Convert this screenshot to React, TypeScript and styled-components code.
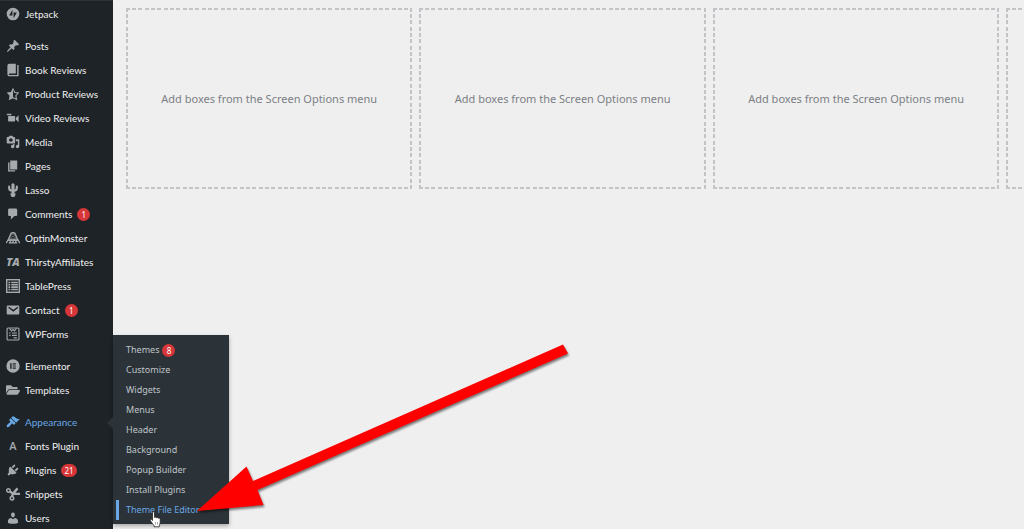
import React from "react";
import styled, { createGlobalStyle, css } from "styled-components";
import { FaFolderOpen } from "react-icons/fa";

const GlobalStyle = createGlobalStyle`
  *, *::before, *::after { box-sizing: border-box; }
  body {
    margin: 0;
    background: #efefef;
    font-family: "Segoe UI", "Noto Sans", sans-serif;
    overflow: hidden;
  }
`;

const Page = styled.div`
  position: relative;
  display: flex;
  height: 100vh;
  overflow: hidden;
`;

const Sidebar = styled.nav`
  position: relative;
  z-index: 1;
  flex: none;
  width: 113px;
  background: #1d2327;
  border-top: 1px solid #2c3338;
  padding-top: 1px;
`;

const MenuGroup = styled.ul`
  list-style: none;
  margin: 0 0 8px;
  padding: 0;
`;

const MenuRow = styled.li<{ $active?: boolean }>`
  position: relative;
  ${(p) =>
    p.$active &&
    css`
      &::after {
        content: "";
        position: absolute;
        right: 0;
        top: 7px;
        border: 6px solid transparent;
        border-left-width: 0;
        border-right-color: #2c3338;
      }
    `}
`;

const MenuLink = styled.a<{ $active?: boolean }>`
  display: flex;
  align-items: center;
  gap: 5px;
  height: 24px;
  padding-left: 6px;
  font-family: "Segoe UI", Lato, sans-serif;
  font-size: 10px;
  line-height: 14px;
  white-space: nowrap;
  text-decoration: none;
  color: ${(p) => (p.$active ? "#68a8e6" : "#f0f0f1")};

  svg {
    flex: none;
    width: 14px;
    height: 14px;
    color: ${(p) => (p.$active ? "#68a8e6" : "#a7aaad")};
  }
`;

const LetterMark = styled.span<{ $brand?: boolean }>`
  flex: none;
  width: 14px;
  display: flex;
  justify-content: center;
  color: #a7aaad;
  font: ${(p) => (p.$brand ? "italic 800 11px/14px" : "600 11px/14px")} "Open Sans", sans-serif;
`;

const Badge = styled.span`
  display: inline-flex;
  align-items: center;
  justify-content: center;
  min-width: 13px;
  height: 13px;
  padding: 0 3px;
  border-radius: 7px;
  background: #d63638;
  color: #fff;
  font-family: "Segoe UI", "Noto Sans", sans-serif;
  font-size: 8px;
  line-height: 13px;
`;

const Submenu = styled.ul`
  position: absolute;
  left: 100%;
  bottom: -90px;
  width: 116px;
  margin: 0;
  padding: 5px 0 4px;
  list-style: none;
  background: #2c3338;
  box-shadow: 0 2px 4px rgba(0, 0, 0, 0.3);
`;

const SubmenuLink = styled.a<{ $current?: boolean }>`
  display: flex;
  align-items: center;
  gap: 3px;
  height: 20px;
  margin-left: 3px;
  padding-left: 10px;
  font-size: 9px;
  line-height: 12px;
  white-space: nowrap;
  text-decoration: none;
  color: ${(p) => (p.$current ? "#68a8e6" : "#bfc4c9")};
  box-shadow: ${(p) => (p.$current ? "inset 3px 0 0 #68a8e6" : "none")};
`;

const Content = styled.main`
  flex: 1;
  min-width: 0;
  padding: 8px 0 0 13px;
`;

const Boxes = styled.div`
  display: grid;
  grid-template-columns: repeat(4, 31.9%);
  gap: 7px;
`;

const dash = (dir: string) =>
  `linear-gradient(to ${dir}, #c3c4c7 4px, transparent 4px 6px, #c3c4c7 6px 10px, transparent 10px 12px, #c3c4c7 12px 16px, transparent 16px)`;

const EmptyBox = styled.section`
  display: flex;
  align-items: center;
  justify-content: center;
  height: 181px;
  color: #7c8085;
  font-size: 11px;
  line-height: 16px;
  background:
    ${dash("right")} left top / 19px 2px repeat-x,
    ${dash("right")} left bottom / 19px 2px repeat-x,
    ${dash("bottom")} left top / 2px 19px repeat-y,
    ${dash("bottom")} right top / 2px 19px repeat-y;
`;

const Arrow = styled.svg`
  position: absolute;
  z-index: 2;
  left: 190px;
  top: 335px;
  pointer-events: none;
  filter: drop-shadow(1px 2px 1px rgba(0, 0, 0, 0.5));
`;

const Pointer = styled.svg`
  position: absolute;
  z-index: 3;
  left: 149px;
  top: 511px;
  pointer-events: none;
`;

const Glyph = ({ d }: { d: string }) => (
  <svg viewBox="0 0 20 20" fill="currentColor" fillRule="evenodd" aria-hidden="true">
    <path d={d} />
  </svg>
);

const icons: Record<string, React.ReactNode> = {
  jetpack: (
    <Glyph d="M10 1a9 9 0 1 0 0 18 9 9 0 0 0 0-18zM9.200 4v8H4.500zM10.800 8h4.700l-4.700 8z" />
  ),
  pin: (
    <Glyph d="M10.44 3.02l1.82-1.82 6.36 6.35-1.83 1.82c-1.05-.68-2.48-.57-3.41.36l-.75.75c-.92.93-1.04 2.35-.35 3.41l-1.83 1.82-2.41-2.41-2.8 2.79c-.42.42-3.38 2.71-3.8 2.29s1.86-3.39 2.28-3.81l2.79-2.79L4.1 9.36l1.83-1.82c1.05.69 2.48.57 3.4-.36l.75-.75c.93-.92 1.05-2.35.36-3.41z" />
  ),
  book: (
    <Glyph d="M16 3h2v16H5c-1.66 0-3-1.34-3-3V4c0-1.66 1.34-3 3-3h9v14H5c-.55 0-1 .45-1 1s.45 1 1 1h11V3z" />
  ),
  star: (
    <Glyph d="M10 1L7 7l-6 .75 4.130 4.620L4 19l6-3 6 3-1.120-6.630L19 7.750 13 7zM10 4l2 4.400 4 .5-2.700 3.200.7 4.400-4-2.200z" />
  ),
  video: (
    <Glyph d="M8 5c0-.55-.45-1-1-1H2c-.55 0-1 .45-1 1 0 .57.49 1 1 1h5c.55 0 1-.45 1-1zm6 5l4-4v10l-4-4v-2zm-1 4V8c0-.55-.45-1-1-1H4c-.55 0-1 .45-1 1v6c0 .55.45 1 1 1h8c.55 0 1-.45 1-1z" />
  ),
  media: (
    <Glyph d="M13 11V4c0-.55-.45-1-1-1h-1.67L9 1H5L3.67 3H2c-.55 0-1 .45-1 1v7c0 .55.45 1 1 1h10c.55 0 1-.45 1-1zM7 4.5c1.38 0 2.5 1.12 2.5 2.5S8.38 9.5 7 9.5 4.5 8.38 4.5 7 5.62 4.5 7 4.5zM14 6h5v10.5c0 1.38-1.12 2.5-2.5 2.5S14 17.88 14 16.5s1.12-2.5 2.5-2.5c.17 0 .34.02.5.05V9h-3V6zm-4 8.05V13h2v3.5c0 1.38-1.12 2.5-2.5 2.5S7 17.88 7 16.5 8.12 14 9.5 14c.17 0 .34.02.5.05z" />
  ),
  pages: <Glyph d="M6 15V2h10v13H6zm-1 1h8v2H3V5h2v11z" />,
  cactus: (
    <svg viewBox="0 0 20 20" fill="none" stroke="currentColor" strokeLinecap="round" aria-hidden="true">
      <path d="M10 2.500v11" strokeWidth="4.500" />
      <path d="M4.500 5v2.500c0 2.500 2 3.500 5 3.500M15.500 5v2.500c0 2.500-2 3.500-5 3.500" strokeWidth="3" />
      <path d="M6.500 14.500h7V17l-1.500 3H8l-1.500-3z" fill="currentColor" stroke="none" />
    </svg>
  ),
  comments: (
    <Glyph d="M5 2h9c1.1 0 2 .9 2 2v7c0 1.1-.9 2-2 2h-2l-5 5v-5H5c-1.1 0-2-.9-2-2V4c0-1.1.9-2 2-2z" />
  ),
  monster: (
    <svg viewBox="0 0 20 20" fill="none" stroke="currentColor" strokeWidth="1.800" aria-hidden="true">
      <path d="M7 3.500C8 2 12 2 13 3.500L17 13H3z" fill="currentColor" fillOpacity="0.4" />
      <circle cx="10" cy="8" r="2.400" fill="#1d2327" stroke="none" />
      <circle cx="10" cy="8" r="1" fill="currentColor" stroke="none" />
      <path d="M0 17.500l3-4.500h14l3 4.500M4 17h12M6 13.500v3M10 13.500v3M14 13.500v3" />
    </svg>
  ),
  table: (
    <svg viewBox="0 0 20 20" fill="none" stroke="currentColor" aria-hidden="true">
      <rect x="1" y="1" width="18" height="18" strokeWidth="2" />
      <path
        d="M3.500 5h2.500M3.500 8.300h2.500M3.500 11.600h2.500M3.500 15h2.500M7.500 5h9.500M7.500 8.300h9.500M7.500 11.600h9.500M7.500 15h9.500"
        strokeWidth="2.300"
      />
    </svg>
  ),
  email: (
    <Glyph d="M3 3.500h14c1.300 0 2 .600 2 1.800v9.400c0 1.200-.700 1.800-2 1.800H3c-1.300 0-2-.600-2-1.800V5.300c0-1.200.700-1.800 2-1.800zm7.400 9.100l6.800-5.500c.300-.300.400-.700.100-1.100-.3-.4-.8-.4-1.200-.2L10.400 9.700 4.700 5.800c-.4-.2-.9-.2-1.200.2-.3.400-.1.800.1 1.100z" />
  ),
  forms: (
    <svg viewBox="0 0 20 20" fill="none" stroke="currentColor" strokeWidth="1.600" aria-hidden="true">
      <rect x="1.500" y="1.500" width="17" height="17" rx="1.500" />
      <path d="M5 2l3 3.500L10 3.500l2 2L15 2M4.500 8.500h2M8.500 8.500h7M4.500 12h2M8.500 12h7M11 15.500h4.500" />
    </svg>
  ),
  elementor: (
    <Glyph d="M10 .5a9.500 9.500 0 1 0 0 19 9.500 9.500 0 0 0 0-19zM6 6h2v8H6zM9.500 6H14v1.700H9.500zM9.500 9.200H14v1.600H9.500zM9.500 12.300H14V14H9.500z" />
  ),
  folder: <FaFolderOpen aria-hidden="true" />,
  brush: (
    <Glyph d="M14.48 11.06L7.41 3.99l1.5-1.5c.5-.56 2.3-.47 3.51.32 1.21.8 1.43 1.28 2.91 2.1 1.18.64 2.45 1.26 4.45.85zm-.71.71L6.7 4.7 4.93 6.47c-.39.39-.39 1.02 0 1.41l1.06 1.06c.39.39.39 1.03 0 1.42-.6.6-1.43 1.11-2.21 1.69-.35.26-.7.53-1.01.84C1.43 14.23.4 16.08 1.4 17.07c.99 1 2.84-.03 4.18-1.36.31-.31.58-.66.85-1.02.57-.78 1.08-1.61 1.69-2.21.39-.39 1.02-.39 1.41 0l1.06 1.06c.39.39 1.02.39 1.41 0z" />
  ),
  plug: (
    <Glyph d="M13.11 4.36L9.87 7.6 8 5.73l3.24-3.24c.35-.34 1.05-.2 1.56.32.52.51.66 1.21.31 1.55zm-8 1.77l.91-1.12 9.01 9.01-1.19.84c-.71.71-2.63 1.16-3.82 1.16H6.14L4.9 17.26c-.59.59-1.54.59-2.12 0-.59-.58-.59-1.53 0-2.12l1.24-1.24v-3.88c0-1.13.4-3.19 1.09-3.89zm7.26 3.97l3.24-3.24c.34-.35 1.04-.21 1.55.31.52.51.66 1.21.31 1.55l-3.24 3.25z" />
  ),
  scissors: (
    <svg viewBox="0 0 20 20" fill="none" stroke="currentColor" aria-hidden="true">
      <circle cx="3.500" cy="5" r="2.500" strokeWidth="2.200" />
      <circle cx="8.500" cy="16" r="2.500" strokeWidth="2.200" />
      <path d="M5.500 6.500L10 9.500l10 .3M8.500 13.500L10 9.500l6.500-7.500" strokeWidth="3.400" />
    </svg>
  ),
  user: (
    <Glyph d="M10 9.25c-2.27 0-2.73-3.44-2.73-3.44C7 4.02 7.82 2 9.97 2c2.16 0 2.98 2.02 2.71 3.81 0 0-.41 3.44-2.68 3.44zm0 2.57L12.72 10c2.39 0 4.52 2.33 4.52 4.53v2.49s-3.65 1.13-7.24 1.13c-3.65 0-7.24-1.13-7.24-1.13v-2.49c0-2.25 1.94-4.48 4.47-4.48z" />
  ),
  ta: <LetterMark $brand>TA</LetterMark>,
  a: <LetterMark>A</LetterMark>,
};

type Item = { label: string; icon: string; count?: number; active?: boolean };

const groups: Item[][] = [
  [{ label: "Jetpack", icon: "jetpack" }],
  [
    { label: "Posts", icon: "pin" },
    { label: "Book Reviews", icon: "book" },
    { label: "Product Reviews", icon: "star" },
    { label: "Video Reviews", icon: "video" },
    { label: "Media", icon: "media" },
    { label: "Pages", icon: "pages" },
    { label: "Lasso", icon: "cactus" },
    { label: "Comments", icon: "comments", count: 1 },
    { label: "OptinMonster", icon: "monster" },
    { label: "ThirstyAffiliates", icon: "ta" },
    { label: "TablePress", icon: "table" },
    { label: "Contact", icon: "email", count: 1 },
    { label: "WPForms", icon: "forms" },
  ],
  [
    { label: "Elementor", icon: "elementor" },
    { label: "Templates", icon: "folder" },
  ],
  [
    { label: "Appearance", icon: "brush", active: true },
    { label: "Fonts Plugin", icon: "a" },
    { label: "Plugins", icon: "plug", count: 21 },
    { label: "Snippets", icon: "scissors" },
    { label: "Users", icon: "user" },
  ],
];

const appearanceItems: { label: string; count?: number }[] = [
  { label: "Themes", count: 8 },
  { label: "Customize" },
  { label: "Widgets" },
  { label: "Menus" },
  { label: "Header" },
  { label: "Background" },
  { label: "Popup Builder" },
  { label: "Install Plugins" },
  { label: "Theme File Editor" },
];

export default function App() {
  return (
    <>
      <GlobalStyle />
      <Page>
        <Sidebar aria-label="Admin menu">
          {groups.map((group) => (
            <MenuGroup key={group[0].label}>
              {group.map((item) => (
                <MenuRow key={item.label} $active={item.active}>
                  <MenuLink href="#" $active={item.active}>
                    {icons[item.icon]}
                    {item.label}
                    {item.count && <Badge>{item.count}</Badge>}
                  </MenuLink>
                  {item.active && (
                    <Submenu>
                      {appearanceItems.map((sub) => (
                        <li key={sub.label}>
                          <SubmenuLink href="#" $current={sub.label === "Theme File Editor"}>
                            {sub.label}
                            {sub.count && <Badge>{sub.count}</Badge>}
                          </SubmenuLink>
                        </li>
                      ))}
                    </Submenu>
                  )}
                </MenuRow>
              ))}
            </MenuGroup>
          ))}
        </Sidebar>
        <Content>
          <Boxes>
            <EmptyBox>Add boxes from the Screen Options menu</EmptyBox>
            <EmptyBox>Add boxes from the Screen Options menu</EmptyBox>
            <EmptyBox>Add boxes from the Screen Options menu</EmptyBox>
            <EmptyBox />
          </Boxes>
        </Content>
        <Arrow width="390" height="185" viewBox="0 0 390 185" aria-hidden="true">
          <path d="M7 176L56.500 131.500L63 146L373 9.500L378 18.500L67.500 155L73.500 170Z" fill="#fe0000" />
        </Arrow>
        <Pointer width="13" height="17" viewBox="0 0 13 17" aria-hidden="true">
          <path
            d="M3.500 1.800c0-1.400 2-1.400 2 0v4.700c.6-.7 1.700-.5 1.900.3.700-.6 1.700-.3 1.900.5.800-.5 1.900-.1 1.900 1v3.200c0 1.300-.7 2-.9 3v1.300H5v-1.200C4.200 13.200 2.600 11.700 1.500 9.700c-.6-1.200.7-1.900 1.400-1l.6.8z"
            fill="#fff"
            stroke="#222"
            strokeWidth="0.800"
          />
          <path d="M6.500 11v2.500M8.500 11v2.500" stroke="#555" strokeWidth="0.500" />
        </Pointer>
      </Page>
    </>
  );
}
